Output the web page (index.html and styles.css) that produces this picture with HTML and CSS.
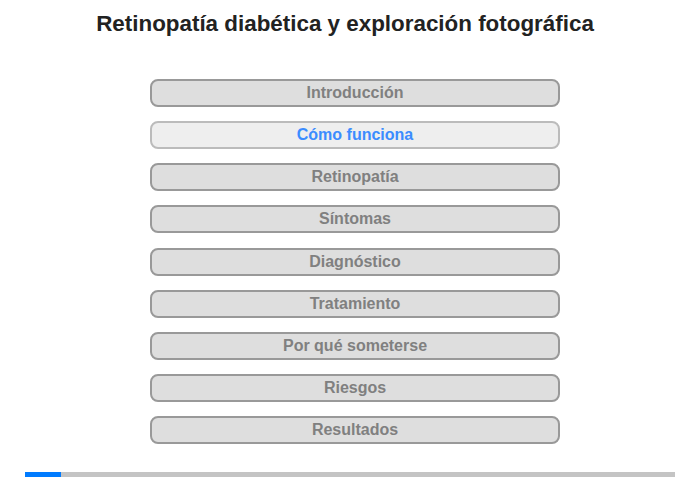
FILE: index.html
```html
<!DOCTYPE html>
<html lang="es">
<head>
    <meta charset="UTF-8">
    <meta name="viewport" content="width=device-width, initial-scale=1.0">
    <title>Retinopatía diabética</title>
    <link rel="stylesheet" href="styles.css">
</head>
<body>
    <div class="page">
        <h1 class="title">Retinopatía diabética y exploración fotográfica</h1>
        <div class="menu">
            <button class="item">Introducción</button>
            <button class="item active">Cómo funciona</button>
            <button class="item">Retinopatía</button>
            <button class="item">Síntomas</button>
            <button class="item">Diagnóstico</button>
            <button class="item">Tratamiento</button>
            <button class="item">Por qué someterse</button>
            <button class="item">Riesgos</button>
            <button class="item">Resultados</button>
        </div>
        <div class="progress"><div class="progress-fill" style="width: 36px;"></div></div>
    </div>
</body>
</html>
```

FILE: styles.css
```css
body { margin: 0; font-family: "Liberation Sans", Arial, sans-serif; background: #fff; }
.page { width: 700px; height: 480px; position: relative; }
.title { margin: 0; padding: 11px 10px 0 0; font-size: 22.4px; font-weight: bold; color: #222; text-align: center; line-height: 26px; }
.menu { display: flex; flex-direction: column; gap: 14.15px; width: 410px; margin: 42px 0 0 150px; }
.item { height: 28px; padding: 0; font-family: inherit; font-size: 16px; font-weight: bold; color: #808080; background: #dedede; border: 2px solid #999; border-radius: 8px; cursor: pointer; }
.item.active { color: #3b8cff; background: #eee; border-color: #bbb; }
.progress { position: absolute; left: 25px; top: 472px; width: 650px; height: 5px; background: #c4c4c4; }
.progress-fill { height: 100%; background: #007bff; }
```
